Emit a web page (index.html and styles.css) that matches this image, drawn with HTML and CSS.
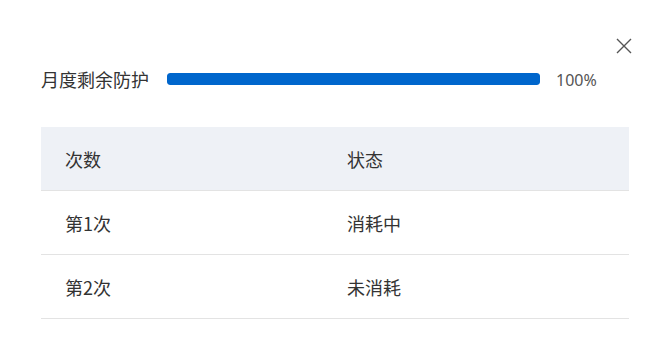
FILE: index.html
```html
<!DOCTYPE html>
<html lang="zh-CN">

<head>
    <meta charset="UTF-8">
    <meta name="viewport" content="width=device-width, initial-scale=1.0">
    <title>月度剩余防护</title>
    <link rel="stylesheet" href="styles.css">
</head>

<body>
    <div class="dialog">
        <div class="close-row">
            <button class="close-btn" type="button" aria-label="关闭">
                <svg width="16" height="16" viewBox="0 0 16 16">
                    <path d="M1 1 L15 15 M15 1 L1 15" stroke="#555" stroke-width="1.4" fill="none"/>
                </svg>
            </button>
        </div>
        <div class="quota">
            <span class="quota-label">月度剩余防护</span>
            <div class="quota-bar">
                <div class="quota-fill" style="width: 100%"></div>
            </div>
            <span class="quota-percent">100%</span>
        </div>
        <table class="usage">
            <thead>
                <tr>
                    <th class="col-count">次数</th>
                    <th>状态</th>
                </tr>
            </thead>
            <tbody>
                <tr>
                    <td>第1次</td>
                    <td>消耗中</td>
                </tr>
                <tr>
                    <td>第2次</td>
                    <td>未消耗</td>
                </tr>
            </tbody>
        </table>
    </div>
</body>

</html>
```

FILE: styles.css
```css
body {
    margin: 0;
    padding: 0;
    background-color: #fff;
    color: #333;
    font-family: "Noto Sans CJK SC", "Noto Sans", sans-serif;
}
.dialog {
    padding: 38px 40px 0 41px;
}
.close-row {
    display: flex;
    justify-content: flex-end;
    height: 16px;
    margin-right: -3px;
}
.close-btn {
    width: 16px;
    height: 16px;
    padding: 0;
    border: none;
    background: none;
    cursor: pointer;
}
.close-btn svg {
    display: block;
}
.quota {
    display: flex;
    align-items: center;
    height: 26px;
    margin-top: 12px;
}
.quota-label {
    font-size: 18px;
    width: 126px;
    flex-shrink: 0;
    white-space: nowrap;
}
.quota-bar {
    flex: 1;
    height: 12px;
    background-color: #e6ecf5;
    border-radius: 3px;
    overflow: hidden;
}
.quota-fill {
    height: 100%;
    background-color: #0066cc;
    border-radius: 3px;
}
.quota-percent {
    width: 73px;
    margin-left: 16px;
    font-family: "Noto Sans", sans-serif;
    font-size: 16px;
    color: #555;
    flex-shrink: 0;
    padding-top: 2px;
}
.usage {
    width: 100%;
    margin-top: 35px;
    border-collapse: collapse;
    font-size: 18px;
}
th, td {
    height: 63px;
    padding: 0 0 0 24px;
    text-align: left;
    font-weight: normal;
    border-bottom: 1px solid #e3e3e3;
    vertical-align: middle;
}
th {
    background-color: #eef1f6;
}
.col-count {
    width: 258px;
}
```
